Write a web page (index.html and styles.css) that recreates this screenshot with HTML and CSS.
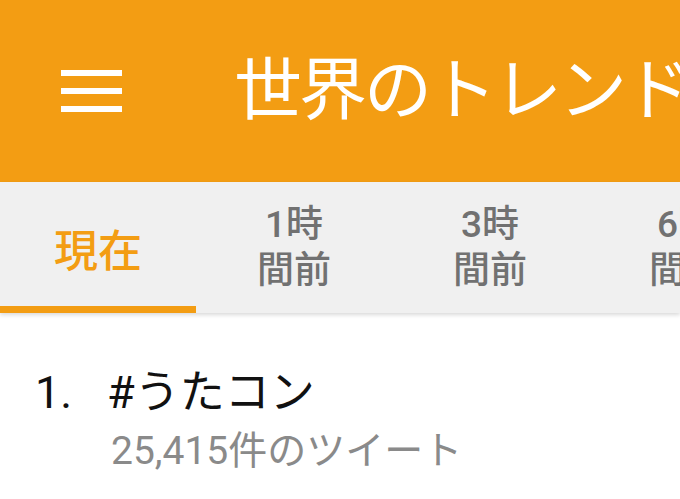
FILE: index.html
```html
<!DOCTYPE html>
<html lang="ja">
<head>
  <meta charset="UTF-8" />
  <title>世界のトレンド</title>
  <link rel="stylesheet" href="styles.css">
</head>
<body>
  <header class="barra">
    <div class="menu">
      <svg width="61" height="42" viewBox="0 0 61 42">
        <rect x="0" y="0" width="61" height="6" fill="#fff"/>
        <rect x="0" y="18" width="61" height="6" fill="#fff"/>
        <rect x="0" y="36" width="61" height="6" fill="#fff"/>
      </svg>
    </div>
    <h1 class="titulo">世界のトレンド</h1>
  </header>

  <nav class="pestanas">
    <div class="pestana activa">現在</div>
    <div class="pestana doble">1時<br>間前</div>
    <div class="pestana doble">3時<br>間前</div>
    <div class="pestana doble">6時<br>間前</div>
  </nav>

  <ol class="lista">
    <li class="tendencia">
      <span class="numero">1.</span>
      <div class="datos">
        <div class="nombre">#うたコン</div>
        <div class="cuenta">25,415件のツイート</div>
      </div>
    </li>
  </ol>
</body>
</html>
```

FILE: styles.css
```css
body {
  margin: 0;
  width: 680px;
  height: 499px;
  overflow: hidden;
  background: #fff;
  font-family: Roboto, "Noto Sans CJK JP", sans-serif;
}

.barra {
  height: 182px;
  background-color: #f39d13;
  display: flex;
  align-items: center;
  overflow: hidden;
  white-space: nowrap;
}

.menu {
  padding-left: 61px;
  width: 61px;
  flex-shrink: 0;
  display: flex;
  align-items: center;
}

.titulo {
  margin: 0 0 0 112px;
  color: #fff;
  font-size: 68px;
  font-weight: 400;
  line-height: 1;
  letter-spacing: -3px;
}

.pestanas {
  display: flex;
  height: 131px;
  background-color: #f0f0f0;
  overflow: hidden;
  box-shadow: 0 2px 4px rgba(0, 0, 0, 0.15);
  position: relative;
}

.pestana {
  flex: 0 0 196px;
  display: flex;
  align-items: center;
  justify-content: center;
  text-align: center;
  color: #717171;
  font-weight: 500;
}

.activa {
  color: #f39d13;
  font-size: 44px;
  box-shadow: inset 0 -7px 0 #f39d13;
}

.doble {
  font-size: 37px;
  line-height: 46px;
}

.lista {
  list-style: none;
  margin: 0;
  padding: 50px 0 0 35px;
}

.tendencia {
  display: flex;
}

.numero {
  width: 72px;
  font-size: 45px;
  line-height: 60px;
  color: #111;
}

.nombre {
  font-size: 45px;
  line-height: 60px;
  color: #111;
}

.cuenta {
  font-size: 39px;
  line-height: 48px;
  color: #8a8a8a;
  margin: 4px 0 0 4px;
}
```
